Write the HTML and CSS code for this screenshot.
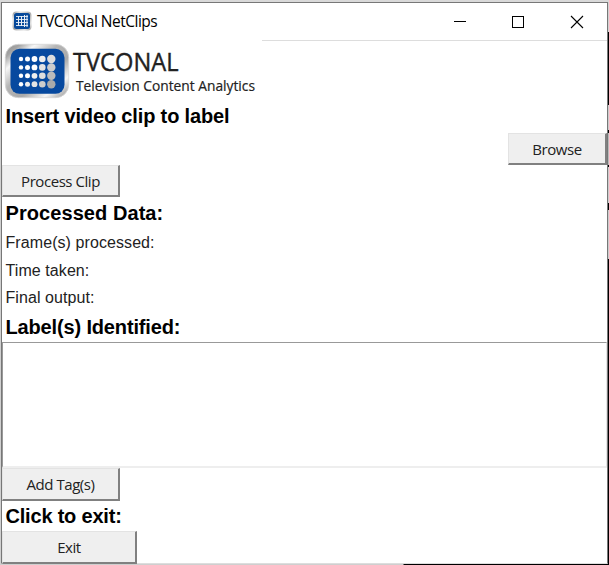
FILE: index.html
```html
<!DOCTYPE html>
<html lang="en">
<head>
<meta charset="utf-8">
<title>TVCONal NetClips</title>
<link rel="stylesheet" href="styles.css">
</head>
<body>
<div class="desktop">
<div class="edge"></div>
<main class="window">
  <header class="titlebar">
    <svg class="app-icon" width="20" height="20" viewBox="0 0 20 20">
      <defs>
        <linearGradient id="metal" x1="0" y1="0" x2="1" y2="1">
          <stop offset="0" stop-color="#8b8b8b"/><stop offset=".22" stop-color="#e5e5e5"/><stop offset=".5" stop-color="#aaa"/><stop offset=".8" stop-color="#e1e1e1"/><stop offset="1" stop-color="#999"/>
        </linearGradient>
      </defs>
      <rect x=".5" y=".5" width="19" height="19" rx="4" fill="url(#metal)"/>
      <rect x="2" y="2" width="16" height="16" rx="2.5" fill="#07499a"/>
      <path d="M4 5.500h12M4 8.500h12M4 11.500h12M4 14.500h12" stroke="#cfdcec" stroke-width="1"/>
      <path d="M6.500 5v10M9.500 5v10M12.500 4v12M15 4v12" stroke="#e9eef5" stroke-width="1"/>
    </svg>
    <span class="caption">TVCONal NetClips</span>
    <svg class="controls" width="131" height="14" viewBox="0 0 131 14" fill="none" stroke="#000" shape-rendering="crispEdges">
      <path d="M0 6.500h12"/>
      <rect x="58.500" y="1.500" width="11" height="11"/>
      <path d="M117 1l12 12M129 1l-12 12" shape-rendering="auto" stroke-width="1.100"/>
    </svg>
  </header>
  <svg class="logo" width="260" height="61" viewBox="2 41 260 61">
    <defs>
      <linearGradient id="rim" x1="0" y1="0" x2="1" y2="1">
        <stop offset="0" stop-color="#8b8b8b"/><stop offset=".12" stop-color="#a5a5a5"/><stop offset=".24" stop-color="#f7f7f7"/><stop offset=".42" stop-color="#b5b5b5"/><stop offset=".62" stop-color="#aaa"/><stop offset=".8" stop-color="#f5f5f5"/><stop offset="1" stop-color="#8d8d8d"/>
      </linearGradient>
    </defs>
    <rect x="5.300" y="44.300" width="63.400" height="53.400" rx="13" fill="url(#rim)" stroke="#d5d5d5" stroke-width=".8"/>
    <rect x="10.500" y="48.800" width="54" height="45" rx="9" fill="#07499f"/>
    <g fill="#fff">
      <circle cx="21" cy="59" r="2.200"/><circle cx="27.500" cy="59" r="2.500"/><circle cx="34.500" cy="59" r="2.900"/><circle cx="42.300" cy="59" r="3.300" fill="#eee"/><circle cx="51.300" cy="59" r="4.200" fill="#ddd"/>
      <circle cx="21" cy="67.400" r="2.200"/><circle cx="27.500" cy="67.400" r="2.500"/><circle cx="34.500" cy="67.400" r="2.900"/><circle cx="42.300" cy="67.400" r="3.300" fill="#e3e3e3"/><circle cx="51.300" cy="67.400" r="4.200" fill="#ccc"/>
      <circle cx="21" cy="75.800" r="2.200"/><circle cx="27.500" cy="75.800" r="2.500"/><circle cx="34.500" cy="75.800" r="2.900" fill="#eee"/><circle cx="42.300" cy="75.800" r="3.300" fill="#ddd"/><circle cx="51.300" cy="75.800" r="4.200" fill="#bbb"/>
      <circle cx="21" cy="84.200" r="2.200"/><circle cx="27.500" cy="84.200" r="2.500" fill="#eee"/><circle cx="34.500" cy="84.200" r="2.900" fill="#e4e4e4"/><circle cx="42.300" cy="84.200" r="3.300" fill="#ccc"/><circle cx="51.300" cy="84.200" r="4.200" fill="#aaa"/>
    </g>
    <text class="brand" x="73" y="70.500" textLength="105.500" lengthAdjust="spacingAndGlyphs">TVCONAL</text>
    <text class="tagline" x="76" y="91" textLength="179" lengthAdjust="spacingAndGlyphs">Television Content Analytics</text>
  </svg>
  <h2 class="insert">Insert video clip to label</h2>
  <div class="browse-row"><button class="browse">Browse</button></div>
  <button class="process">Process Clip</button>
  <h2 class="data">Processed Data:</h2>
  <p class="frames">Frame(s) processed:</p>
  <p class="time">Time taken:</p>
  <p class="output">Final output:</p>
  <h2 class="labels">Label(s) Identified:</h2>
  <div class="textbox"></div>
  <button class="tags">Add Tag(s)</button>
  <h2 class="leave">Click to exit:</h2>
  <button class="exit">Exit</button>
</main>
<div class="backdrop"></div>
</div>
</body>
</html>
```
FILE: styles.css
```css
* { box-sizing: border-box; }
body { margin: 0; background: #d9d9d9; overflow: hidden; }
.desktop { display: flex; height: 565px; padding-top: 2px; background: linear-gradient(90deg, #cfcfcf 403px, #000 404px) 0 564px / 100% 1px no-repeat, #d9d9d9; }
.edge { width: 1px; background: #d0d0d0; height: 562px; }
.window { width: 607px; height: 562px; border: 1px solid #777; border-bottom-color: #ddd; background: #fff; display: flex; flex-direction: column; align-items: flex-start; color: #000; }
.backdrop { width: 1px; height: 562px; background: linear-gradient(#d2d2d2 30px, #000 30px 103px, #ccc 103px 128px, #000 128px 131px, #bbb 131px 163px, #000 163px 165px, #ccc 165px 201px, #000 201px 208px, #ccc 208px 257px, #000 257px); }
.titlebar { width: 100%; height: 38px; flex: none; display: flex; align-items: center; padding-left: 10px; background: linear-gradient(#ddd, #ddd) 260px 100% / 345px 1px no-repeat; }
.app-icon { margin-top: -2px; }
.caption { font: 15.500px "Open Sans", "Noto Sans", sans-serif; margin: -2px 0 0 5px; white-space: nowrap; letter-spacing: -.5px; }
.controls { margin-left: auto; margin-right: 22px; }
.logo { display: block; flex: none; }
.brand { font: 25px "Open Sans", sans-serif; fill: #222; stroke: #222; stroke-width: .4px; }
.tagline { font: 14px "Open Sans", sans-serif; fill: #222; stroke: #222; stroke-width: .2px; }
h2 { margin: 0; padding-left: 3.500px; flex: none; font: bold 20px/30px "Liberation Sans", Arial, sans-serif; letter-spacing: -.15px; white-space: nowrap; }
p { margin: 0; padding-left: 3.500px; flex: none; height: 27.500px; font: 16px/28px "Liberation Sans", Arial, sans-serif; letter-spacing: .08px; color: #222; white-space: nowrap; }
button { flex: none; width: 118px; height: 32px; padding: 0; background: #efefef; border: 1px solid #e3e3e3; border-right: 2px solid #808080; border-bottom: 2px solid #808080; color: #222; font: 15px/20px "Open Sans", "Noto Sans", sans-serif; letter-spacing: -.45px; border-radius: 0; }
.insert { line-height: 29px; height: 30px; }
.browse-row { width: 100%; display: flex; justify-content: flex-end; height: 33px; padding-top: 1px; flex: none; }
.browse { width: 99px; }
.data { height: 32px; line-height: 32px; letter-spacing: .07px; }
.labels { height: 30px; }
.textbox { width: 605px; height: 126px; flex: none; border: 1px solid #999; border-right: 1px solid #e5e5e5; border-bottom: 2px solid #eee; }
.tags { height: 33px; }
.leave { height: 30px; letter-spacing: -.2px; }
.exit { width: 135px; height: 33px; }
```
